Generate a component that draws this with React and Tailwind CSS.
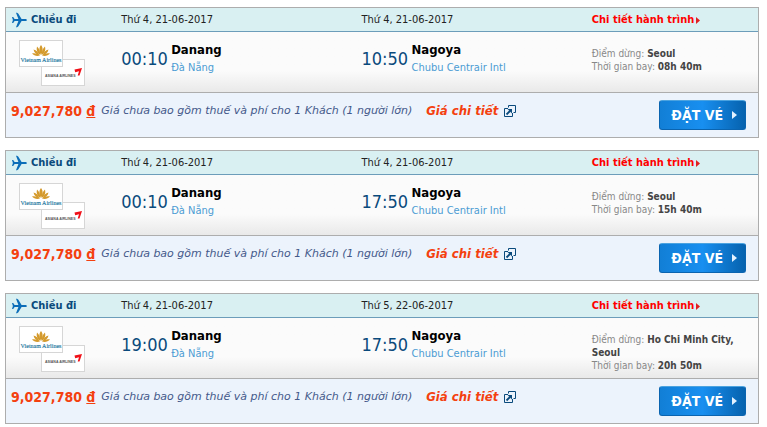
import React from 'react';

const flights = [
  {
    id: 1,
    departDate: 'Thứ 4, 21-06-2017',
    arriveDate: 'Thứ 4, 21-06-2017',
    departTime: '00:10',
    arriveTime: '10:50',
    stops: 'Seoul',
    duration: '08h 40m'
  },
  {
    id: 2,
    departDate: 'Thứ 4, 21-06-2017',
    arriveDate: 'Thứ 4, 21-06-2017',
    departTime: '00:10',
    arriveTime: '17:50',
    stops: 'Seoul',
    duration: '15h 40m'
  },
  {
    id: 3,
    departDate: 'Thứ 4, 21-06-2017',
    arriveDate: 'Thứ 5, 22-06-2017',
    departTime: '19:00',
    arriveTime: '17:50',
    stops: 'Ho Chi Minh City, Seoul',
    duration: '20h 50m'
  }
];

const PlaneIcon = () => (
  <svg className="w-4 h-4 shrink-0" viewBox="0 0 16 16" fill="#0b6db8" aria-hidden="true">
    <path d="M16 8c0-.7-1-1.100-2.200-1.100H10.600L7.200 1.500 6 .8H5L7.400 6.900H3.600L2.200 5H1L1.900 8 1 11h1.200l1.400-1.900h3.800L5 15.200h1l1.200-.7 3.400-5.400h3.200C15 9.100 16 8.700 16 8z" />
  </svg>
);

const PopupIcon = () => (
  <svg className="w-3 h-3" viewBox="0 0 12 12" fill="none" stroke="#0a4a7c" aria-hidden="true">
    <path d="M4.500 2.500v-2h7v7h-2" />
    <path d="M4 3.500H.5v8h8V8" />
    <path d="M2.500 9.500L6 6" strokeWidth="1.800" />
    <path d="M3.500 4H8v4.500z" fill="#0a4a7c" stroke="none" />
  </svg>
);

const AirlineLogos = () => (
  <div className="relative w-[66px] h-[46px] ml-[13px] mt-2">
    <div className="absolute right-0 bottom-0 w-11 h-[27px] bg-white border border-[#d6d6d6]">
      <svg className="w-full h-full" viewBox="0 0 42 25" aria-label="Asiana Airlines">
        <text x="3" y="17" fontSize="3.500" fontWeight="bold" fill="#555" fontFamily="Liberation Sans, sans-serif">
          ASIANA AIRLINES
        </text>
        <path d="M32.500 9.500L40 8l-2.500 7.500h-1.800l1.300-4.300-3.800 1.100z" fill="#f01018" />
      </svg>
    </div>
    <div className="absolute left-0 top-0 w-11 h-[27px] bg-white border border-[#d6d6d6]">
      <svg className="w-full h-full" viewBox="0 0 42 25" aria-label="Vietnam Airlines">
        <g fill="#d49a2c">
          <path d="M21 4c2 2.500 2.300 6 0 10-2.300-4-2-7.500 0-10z" />
          <path d="M17 5.500c2.400 2 3.400 5 3.200 8.500-3-2-4.200-5-3.200-8.500zM25 5.500c-2.400 2-3.400 5-3.200 8.500 3-2 4.200-5 3.200-8.500z" />
          <path d="M13.500 8.500c3 .5 5 2.800 6 5.700-3.200-.5-5.300-2.500-6-5.700zM28.500 8.500c-3 .5-5 2.800-6 5.700 3.200-.5 5.300-2.500 6-5.700z" />
          <path d="M12 12.500c3-.6 5.600.2 8 2-3 1-6 .3-8-2zM30 12.500c-3-.6-5.600.2-8 2 3 1 6 .3 8-2z" />
        </g>
        <text x="21" y="21" textAnchor="middle" fontSize="6" fill="#2277a0" stroke="#2277a0" strokeWidth=".15" fontFamily="Liberation Serif, serif">
          Vietnam Airlines
        </text>
      </svg>
    </div>
  </div>
);

const Airport = ({ time, city, name }) => (
  <div className="flex items-start pt-[10px]">
    <span className="w-[50px] shrink-0 pt-1 text-[18px] leading-[26px] text-[#0a4a7c]">{time}</span>
    <div>
      <div className="text-[13px] leading-4 font-bold text-black">{city}</div>
      <div className="text-[11px] leading-5 text-[#4b9cd3]">{name}</div>
    </div>
  </div>
);

const FlightCard = ({ flight }) => (
  <section className="border border-[#adadad]">
    <div className="grid grid-cols-[115fr_240fr_230fr_166fr] items-center h-6 pt-px border-b border-[#6c9dba] bg-[#d9f0f2] text-[11px] text-[#222]">
      <div className="flex items-center gap-1 pl-[5px] font-bold text-[#0a4a7c]">
        <PlaneIcon />
        Chiều đi
      </div>
      <div>{flight.departDate}</div>
      <div>{flight.arriveDate}</div>
      <a href="#" className="flex items-center gap-[2px] font-bold text-[#f00] whitespace-nowrap">
        Chi tiết hành trình
        <svg className="w-1 h-[7px]" viewBox="0 0 4 7" fill="#e02020" aria-hidden="true">
          <path d="M0 0l4 3.500L0 7z" />
        </svg>
      </a>
    </div>

    <div className="grid grid-cols-[115fr_240fr_230fr_166fr] h-[61px] border-b border-[#adadad] bg-linear-to-b from-[#fbfbfb] from-65% to-[#e9e9e9]">
      <AirlineLogos />
      <Airport time={flight.departTime} city="Danang" name="Đà Nẵng" />
      <Airport time={flight.arriveTime} city="Nagoya" name="Chubu Centrair Intl" />
      <div className="pt-[15px] pr-3 text-[10px] leading-[13px] text-[#888]">
        <div>Điểm dừng: <b className="text-[#444]">{flight.stops}</b></div>
        <div>Thời gian bay: <b className="text-[#444]">{flight.duration}</b></div>
      </div>
    </div>

    <div className="flex items-start h-11 pl-[5px] pr-3 bg-[#ecf3fc] leading-[18px] whitespace-nowrap">
      <div className="pt-[9px] text-[14px] font-bold text-[#f4400f]">
        9,027,780 <span className="underline">đ</span>
      </div>
      <div className="pt-[9px] pl-[6px] text-[11px] italic text-[#44598a] font-['DejaVu_Sans',sans-serif]">
        Giá chưa bao gồm thuế và phí cho 1 Khách (1 người lớn)
      </div>
      <a href="#" className="flex items-center gap-[6px] pt-[9px] pl-[14px] text-[13px] font-bold italic text-[#f4400f]">
        Giá chi tiết
        <PopupIcon />
      </a>
      <button className="flex items-center justify-end gap-[9px] w-[87px] h-[30px] mt-[7px] ml-auto pr-2 rounded-[3px] border border-[#0a64b0] border-t-[#4ba3e0] bg-linear-to-r from-[#127fd6] via-[#188ff0] to-[#0662ae] text-[14px] font-bold text-white cursor-pointer">
        ĐẶT VÉ
        <svg className="w-[5px] h-2" viewBox="0 0 5 8" fill="#e4f2ff" aria-hidden="true">
          <path d="M0 0l5 4-5 4z" />
        </svg>
      </button>
    </div>
  </section>
);

const App = () => {
  return (
    <main className="flex flex-col gap-3 pt-[7px] pl-[5px] pr-2 bg-white font-['DejaVu_Sans_Condensed','DejaVu_Sans',sans-serif]">
      {flights.map((flight) => (
        <FlightCard key={flight.id} flight={flight} />
      ))}
    </main>
  );
};

export default App;
